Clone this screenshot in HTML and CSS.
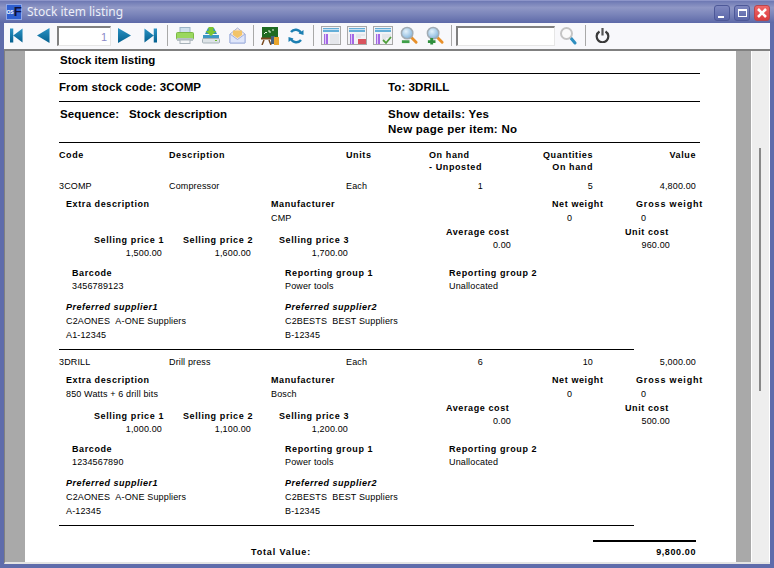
FILE: index.html
```html
<!DOCTYPE html>
<html lang="en">
<head>
<meta charset="utf-8">
<title>Stock item listing</title>
<link rel="stylesheet" href="styles.css">
</head>
<body>
<svg class="defs" width="0" height="0" aria-hidden="true">
  <defs>
    <linearGradient id="nav" x1="0" y1="0" x2="0" y2="1"><stop offset="0" stop-color="#2c93c4"/><stop offset="1" stop-color="#04608f"/></linearGradient>
    <radialGradient id="lens" cx=".4" cy=".35" r=".7"><stop offset="0" stop-color="#e4f2fb"/><stop offset="1" stop-color="#7fb2dc"/></radialGradient>
    <symbol id="page" viewBox="0 0 20 20">
      <rect x="0.5" y="0.5" width="19" height="18" fill="#f2f3f6" stroke="#a8a8a8"/>
      <rect x="2" y="2" width="16" height="4" fill="#64aed8"/>
      <rect x="2" y="3" width="16" height="1" fill="#c8e0f0"/>
      <rect x="3" y="8" width="4" height="10" fill="#a468e4"/>
      <rect x="4" y="8" width="1" height="10" fill="#dccaf6"/>
    </symbol>
    <symbol id="lines" viewBox="0 0 20 20">
      <path d="M9 9h9M9 11h9M9 13h9M9 15h9M9 17h9" stroke="#d6d9df" stroke-width="1"/>
    </symbol>
    <symbol id="glass" viewBox="0 0 20 20">
      <path d="M11 11l6 6" stroke="#e8902a" stroke-width="3" stroke-linecap="round"/>
      <circle cx="7.5" cy="7.5" r="6" fill="url(#lens)" stroke="#a2acb4" stroke-width="1.6"/>
    </symbol>
  </defs>
</svg>
<div class="window">
  <header class="titlebar">
    <div class="appicon"><span class="app-os">OS</span><span class="app-f">F</span></div>
    <div class="wintitle">Stock item listing</div>
    <div class="winbtns">
      <div class="winbtn"><span class="glyph-min"></span></div>
      <div class="winbtn"><span class="glyph-max"></span></div>
      <div class="winbtn winclose">
        <svg width="12" height="12" viewBox="0 0 12 12"><path d="M2 2l8 8M10 2l-8 8" stroke="#fff" stroke-width="2.6"/></svg>
      </div>
    </div>
  </header>
  <div class="body">
    <nav class="toolbar">
      <div class="tool tool-first"><svg width="13" height="15" viewBox="0 0 14 15"><path d="M0 0h3.5v15H0zM3.5 7.5L13.5 0v15z" fill="url(#nav)"/></svg></div>
      <div class="tool ml2"><svg width="13" height="15" viewBox="0 0 13 15"><path d="M12.5 0v15L0 7.5z" fill="url(#nav)"/></svg></div>
      <div class="pagebox ml1">1</div>
      <div class="tool"><svg width="13" height="15" viewBox="0 0 13 15"><path d="M0 0v15L13 7.5z" fill="url(#nav)"/></svg></div>
      <div class="tool"><svg width="13" height="15" viewBox="0 0 14 15"><path d="M14 0h-3.500v15H14zM10.500 7.500L0.500 0v15z" fill="url(#nav)"/></svg></div>
      <div class="sep ml4"></div>
      <div class="tool ml4"><svg width="18" height="17" viewBox="0 0 18 17"><rect x="4" y="0.500" width="10" height="6" fill="#cfe0ec" stroke="#9db5c6"/><rect x="0.500" y="5.500" width="17" height="7" rx="1" fill="#9ad85e" stroke="#7cb846"/><rect x="1" y="11" width="16" height="3" fill="#b6c0c6"/><rect x="4" y="13" width="10" height="3.500" fill="#f4f6f8" stroke="#a8b2ba"/></svg></div>
      <div class="tool"><svg width="18" height="17" viewBox="0 0 18 17"><path d="M3 7L6 1h6l3 6z" fill="#2f8fbd"/><path d="M1 8h16v5H1z" fill="#3d97c4"/><path d="M6.500 0h5v4h3L9 9 3.500 4h3z" fill="#7cc52f"/><rect x="0.500" y="11.500" width="17" height="4.500" rx="1" fill="#dde3e7" stroke="#a5b0b8"/><rect x="13" y="13" width="2" height="1" fill="#6cba2c"/></svg></div>
      <div class="tool"><svg width="17" height="17" viewBox="0 0 17 17"><path d="M1 7L8.500 1 16 7v9H1z" fill="#f6e6d8" stroke="#a9b4d8"/><path d="M4 8V3.500h9V8l-4.500 3z" fill="#f2c46a"/><path d="M1 7l7.500 5.500L16 7v9H1z" fill="#dfe6fa" stroke="#9fb0e0"/></svg></div>
      <div class="sep ml3"></div>
      <div class="tool ml3"><svg width="18" height="18" viewBox="0 0 18 18"><rect x="1" y="0" width="16" height="11" fill="#1f6b22"/><path d="M3 7l2-2 1 1M7 4h2v2M11 3h2" stroke="#e6f5e0" stroke-width="1" fill="none"/><path d="M0 11.500h11" stroke="#7a4a1e" stroke-width="2"/><path d="M3 13l-2 5M8 13l2 5" stroke="#7a4a1e" stroke-width="1.500"/><rect x="10" y="9" width="4" height="8" fill="#44607e"/><rect x="13" y="10" width="5" height="8" fill="#e9a52c"/></svg></div>
      <div class="tool"><svg width="16" height="16" viewBox="0 0 16 16"><path d="M13 5A6 6 0 0 0 3 4" fill="none" stroke="#1c7fb2" stroke-width="2.400"/><path d="M10.500 5.500L15.500 7l0-5z" fill="#1c7fb2"/><path d="M3 11a6 6 0 0 0 10 1" fill="none" stroke="#1c7fb2" stroke-width="2.400"/><path d="M5.500 10.500L.5 9v5z" fill="#1c7fb2"/></svg></div>
      <div class="sep ml4"></div>
      <div class="tool ml4"><svg width="20" height="19" viewBox="0 0 20 19"><use href="#page" width="20" height="20"/><use href="#lines" width="20" height="20"/></svg></div>
      <div class="tool"><svg width="20" height="19" viewBox="0 0 20 19"><use href="#page" width="20" height="20"/><path d="M9 9h9M9 11h5" stroke="#d6d9df"/><rect x="11" y="13" width="8" height="5" fill="#d9545f"/></svg></div>
      <div class="tool"><svg width="20" height="19" viewBox="0 0 20 19"><use href="#page" width="20" height="20"/><path d="M9 9h9M9 11h9M9 13h4" stroke="#d6d9df"/><path d="M10 14l3 3 5-6" fill="none" stroke="#4f9e3a" stroke-width="1.800"/></svg></div>
      <div class="tool"><svg width="19" height="19" viewBox="0 0 20 20"><use href="#glass" width="20" height="20"/><rect x="2" y="15" width="8" height="3" fill="#3f9f4a"/></svg></div>
      <div class="tool"><svg width="19" height="19" viewBox="0 0 20 20"><use href="#glass" width="20" height="20"/><path d="M2 16.500h8M6 12.500v7" stroke="#2f8f3e" stroke-width="3"/></svg></div>
      <div class="sep ml3"></div>
      <div class="searchbox ml4"></div>
      <div class="tool"><svg width="17" height="18" viewBox="0 0 17 18"><path d="M10 10l5 6" stroke="#2f8fc0" stroke-width="3" stroke-linecap="round"/><circle cx="6.500" cy="6.500" r="5.500" fill="#fafafa" stroke="#c4c4c4" stroke-width="2"/></svg></div>
      <div class="sep ml4"></div>
      <div class="tool ml3"><svg width="15" height="15" viewBox="0 0 15 15"><path d="M4.500 3.500a5.800 5.800 0 1 0 6 0" fill="none" stroke="#3a3a3a" stroke-width="2.200"/><rect x="6.400" y="0" width="2.200" height="7.500" fill="#555"/></svg></div>
    </nav>
    <main class="viewer">
      <div class="gutter gutter-left"></div>
      <section class="page">
        <h1 class="rep-title">Stock item listing</h1>
        <hr class="rule">
        <div class="rep-range"><span class="rep-col">From stock code: 3COMP</span><span>To: 3DRILL</span></div>
        <hr class="rule">
        <div class="rep-opts">
          <div class="rep-seq">Sequence:&nbsp;&nbsp;&nbsp;Stock description</div>
          <div><div>Show details: Yes</div><div>New page per item: No</div></div>
        </div>
        <hr class="rule">

        <div class="row r-main bold h12 mt6"><span>Code</span><span>Description</span><span>Units</span><span>On hand</span><span class="right">Quantities</span><span class="right">Value</span></div>
        <div class="row r-main bold h19"><span></span><span></span><span></span><span>- Unposted</span><span class="right">On hand</span><span></span></div>

        <article class="item">
          <div class="row r-main h18"><span>3COMP</span><span>Compressor</span><span>Each</span><span class="right">1</span><span class="right">5</span><span class="right">4,800.00</span></div>
          <div class="row r-a bold h14"><span>Extra description</span><span>Manufacturer</span><span>Net weight</span><span class="wide">Gross weight</span></div>
          <div class="row r-b h14"><span></span><span>CMP</span><span>0</span><span>0</span></div>
          <div class="row r-c bold h8"><span>Average cost</span><span>Unit cost</span></div>
          <div class="row r-d bold h5"><span>Selling price 1</span><span>Selling price 2</span><span>Selling price 3</span></div>
          <div class="row r-e h8"><span class="right">0.00</span><span class="right">960.00</span></div>
          <div class="row r-f h20"><span class="right">1,500.00</span><span class="right">1,600.00</span><span class="right">1,700.00</span></div>
          <div class="row r-g bold h13"><span>Barcode</span><span>Reporting group 1</span><span>Reporting group 2</span></div>
          <div class="row r-g h21"><span>3456789123</span><span>Power tools</span><span>Unallocated</span></div>
          <div class="row r-h bolditalic h14"><span>Preferred supplier1</span><span>Preferred supplier2</span></div>
          <div class="row r-h h14"><span>C2AONES&nbsp;&nbsp;A-ONE Suppliers</span><span>C2BESTS&nbsp;&nbsp;BEST Suppliers</span></div>
          <div class="row r-h h20"><span>A1-12345</span><span>B-12345</span></div>
          <hr class="rule rule-short">
        </article>

        <article class="item">
          <div class="row r-main h18"><span>3DRILL</span><span>Drill press</span><span>Each</span><span class="right">6</span><span class="right">10</span><span class="right">5,000.00</span></div>
          <div class="row r-a bold h14"><span>Extra description</span><span>Manufacturer</span><span>Net weight</span><span class="wide">Gross weight</span></div>
          <div class="row r-b h14"><span>850 Watts + 6 drill bits</span><span>Bosch</span><span>0</span><span>0</span></div>
          <div class="row r-c bold h8"><span>Average cost</span><span>Unit cost</span></div>
          <div class="row r-d bold h5"><span>Selling price 1</span><span>Selling price 2</span><span>Selling price 3</span></div>
          <div class="row r-e h8"><span class="right">0.00</span><span class="right">500.00</span></div>
          <div class="row r-f h20"><span class="right">1,000.00</span><span class="right">1,100.00</span><span class="right">1,200.00</span></div>
          <div class="row r-g bold h13"><span>Barcode</span><span>Reporting group 1</span><span>Reporting group 2</span></div>
          <div class="row r-g h21"><span>1234567890</span><span>Power tools</span><span>Unallocated</span></div>
          <div class="row r-h bolditalic h14"><span>Preferred supplier1</span><span>Preferred supplier2</span></div>
          <div class="row r-h h14"><span>C2AONES&nbsp;&nbsp;A-ONE Suppliers</span><span>C2BESTS&nbsp;&nbsp;BEST Suppliers</span></div>
          <div class="row r-h h20"><span>A-12345</span><span>B-12345</span></div>
          <hr class="rule rule-short">
        </article>

        <div class="total-rule"></div>
        <div class="row r-total"><span class="bold wide">Total Value:</span><span class="right bold">9,800.00</span></div>
      </section>
      <div class="gutter gutter-right"></div>
      <aside class="scrollbar"><div class="thumb"></div></aside>
    </main>
  </div>
</div>
</body>
</html>
```

FILE: styles.css
```css
* { box-sizing: border-box; }
html, body { margin: 0; padding: 0; }
body { width: 774px; height: 568px; overflow: hidden; background: #5f6cab; font-family: "Liberation Sans", Arial, sans-serif; color: #000; }
.defs { position: absolute; }

.window { width: 774px; height: 568px; display: flex; flex-direction: column; background: #5f6cab; padding-bottom: 4px; }

.titlebar { height: 23px; flex: none; display: flex; align-items: center; padding: 0 4px 0 6px; border-top: 1px solid #8d95c9;
  background: linear-gradient(#6d78b3 0, #8f97c5 30%, #7b85ba 60%, #5d69a8 100%); }
.appicon { width: 16px; height: 16px; background: #2f5fd0; border: 1px solid #8fa6e6; display: flex; align-items: center; justify-content: center; font-weight: bold; line-height: 14px; }
.app-os { font-size: 5px; color: #fff; }
.app-f { font-size: 13px; color: #10103a; }
.wintitle { margin-left: 5px; flex: 1; font-family: "Noto Sans", sans-serif; font-size: 12px; line-height: 16px; color: #eceef8; }
.winbtns { display: flex; gap: 4px; margin-top: 2px; }
.winbtn { width: 16px; height: 16px; border: 1px solid #4d5898; border-radius: 3px; background: linear-gradient(#7f88c0, #5a66a8); display: flex; align-items: center; justify-content: center; }
.winclose { background: linear-gradient(#f0686a, #dc3c3e); border-color: #b8464e; }
.glyph-min { width: 6px; height: 2px; background: #fff; margin-top: 7px; margin-right: 2px; }
.glyph-max { width: 9px; height: 8px; border: 1px solid #fff; border-top-width: 2px; }

.body { flex: 1; margin: 0 4px; display: flex; flex-direction: column; min-height: 0; background: #f8f8fb; }

.toolbar { height: 28px; flex: none; display: flex; align-items: center; padding-bottom: 1px; background: #f8f8fb; border-bottom: 2px solid #808080; }
.tool { width: 26px; height: 22px; flex: none; display: flex; align-items: center; justify-content: center; }
.tool-first { width: 24px; }
.sep { width: 1px; height: 21px; flex: none; background: #a8a8a8; }
.ml1 { margin-left: 1px; }
.ml2 { margin-left: 2px; }
.ml3 { margin-left: 3px; }
.ml4 { margin-left: 4px; }
.pagebox { width: 54px; height: 20px; flex: none; background: #fff; border: 1px solid #e6e6e6; border-top: 2px solid #808080; border-left: 2px solid #808080; font-size: 11px; line-height: 18px; text-align: right; padding-right: 3px; color: #8a8ac8; }
.searchbox { width: 99px; height: 20px; flex: none; background: #fff; border: 1px solid #e6e6e6; border-top: 2px solid #808080; border-left: 2px solid #808080; }

.viewer { flex: 1; min-height: 0; display: flex; background: #f0f0f0; border-bottom: 2px solid #e4e4e4; border-left: 1px solid #808080; }
.gutter { flex: none; background: #a9a9a9; }
.gutter-left { width: 20px; }
.gutter-right { width: 15px; }
.page { width: 711px; flex: none; background: #fff; padding: 2px 36px 0 34px; overflow: hidden; }
.scrollbar { flex: 1; background: #eeeeee; border-left: 1px solid #fff; border-right: 1px solid #fff; padding: 97px 0 0 7px; }
.thumb { width: 2px; height: 243px; background: #888; }

.rule { height: 1px; margin: 0; border: 0; background: #000; }
.rule-short { width: 575px; }

.rep-title { margin: 0; height: 20px; font-size: 11.5px; line-height: 14px; font-weight: bold; padding-left: 1px; }
.rep-range { height: 27px; display: flex; font-size: 11.5px; line-height: 27px; font-weight: bold; letter-spacing: .1px; }
.rep-col { width: 329px; flex: none; }
.rep-opts { height: 40px; display: flex; font-size: 11.5px; line-height: 15px; font-weight: bold; padding-top: 5px; letter-spacing: .25px; }
.rep-seq { width: 329px; flex: none; padding-left: 1px; letter-spacing: .1px; }

.row { display: grid; font-size: 9px; line-height: 12px; letter-spacing: .15px; white-space: nowrap; }
.bold { font-weight: bold; letter-spacing: .6px; }
.wide { letter-spacing: .85px; }
.bolditalic { font-weight: bold; font-style: italic; letter-spacing: .5px; }
.right { text-align: right; }
.mt6 { margin-top: 6px; }
.h5 { height: 5px; }
.h8 { height: 8px; }
.h12 { height: 12px; }
.h13 { height: 13px; }
.h14 { height: 14px; }
.h18 { height: 18px; }
.h19 { height: 19px; }
.h20 { height: 20px; }
.h21 { height: 21px; }

.item { padding-bottom: 6px; }
.r-main { grid-template-columns: 110px 177px 83px 54px 110px 103px; }
.r-a { margin-left: 7px; grid-template-columns: 205px 281px 84px 1fr; }
.r-b { margin-left: 7px; grid-template-columns: 205px 296px 74px 1fr; }
.r-c { margin-left: 387px; grid-template-columns: 179px 1fr; }
.r-d { margin-left: 35px; grid-template-columns: 89px 96px 1fr; }
.r-e { margin-left: 387px; grid-template-columns: 65px 159px; }
.r-f { grid-template-columns: 103px 89px 97px; }
.r-g { margin-left: 13px; grid-template-columns: 213px 164px 1fr; }
.r-h { margin-left: 7px; grid-template-columns: 219px 1fr; }

.total-rule { width: 103px; height: 2px; margin: 8px 0 4px 534px; background: #000; }
.r-total { margin-left: 192px; grid-template-columns: 342px 103px; }
```
